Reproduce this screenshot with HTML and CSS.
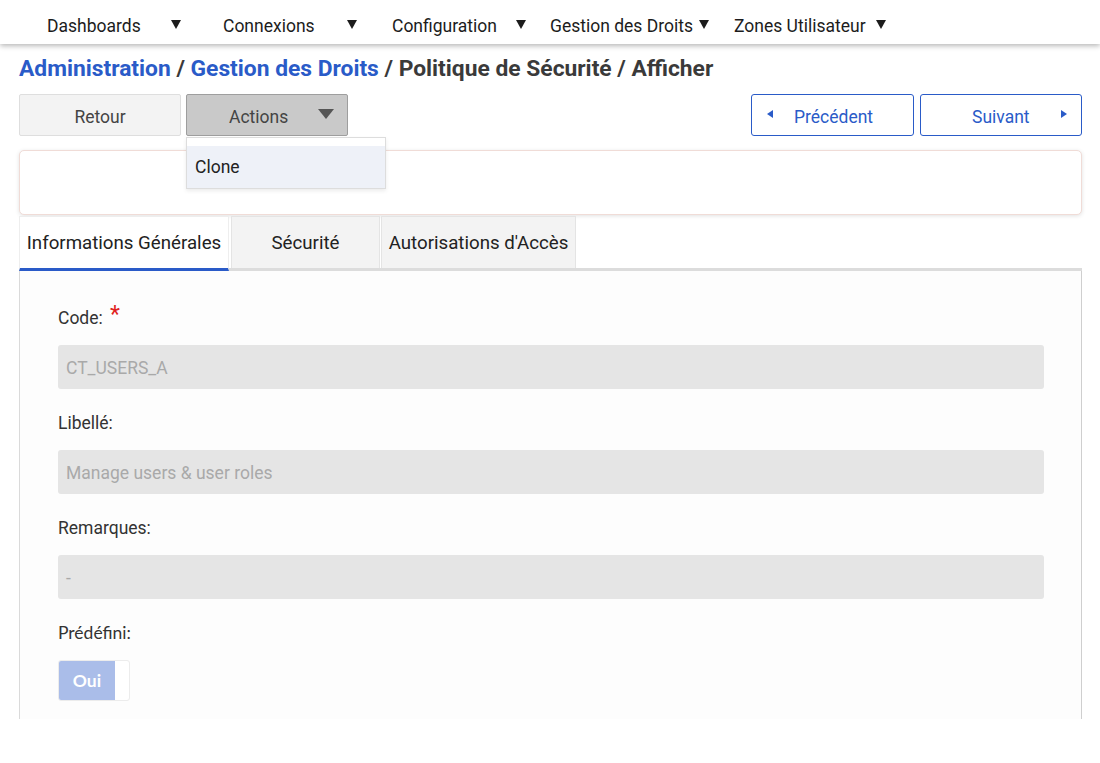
FILE: index.html
```html
<!DOCTYPE html>
<html lang="fr">
<head>
<meta charset="utf-8">
<title>Politique de Sécurité</title>
<link rel="stylesheet" href="styles.css">
</head>
<body>
<header class="topnav">
  <nav class="menu">
    <div class="menu-item"><span class="menu-label">Dashboards</span><span class="caret"></span></div>
    <div class="menu-item"><span class="menu-label">Connexions</span><span class="caret"></span></div>
    <div class="menu-item"><span class="menu-label">Configuration</span><span class="caret"></span></div>
    <div class="menu-item"><span class="menu-label">Gestion des Droits</span><span class="caret"></span></div>
    <div class="menu-item"><span class="menu-label">Zones Utilisateur</span><span class="caret caret-wide"></span></div>
  </nav>
</header>
<main class="page">
  <h1 class="breadcrumb"><span class="crumb-link">Administration</span> / <span class="crumb-link">Gestion des Droits</span> / Politique de Sécurité / Afficher</h1>
  <div class="toolbar">
    <button class="btn btn-default">Retour</button>
    <div class="dropdown">
      <button class="btn btn-actions"><span class="btn-text">Actions</span><span class="caret-big"></span></button>
      <div class="dropdown-menu">
        <div class="dropdown-item">Clone</div>
      </div>
    </div>
    <div class="spacer"></div>
    <button class="btn btn-nav btn-prev"><span class="tri-left"></span><span class="nav-text">Précédent</span></button>
    <button class="btn btn-nav btn-next"><span class="nav-text">Suivant</span><span class="tri-right"></span></button>
  </div>
  <div class="card"></div>
  <div class="tabs">
    <div class="tab tab-active">Informations Générales</div>
    <div class="tab tab-secu">Sécurité</div>
    <div class="tab tab-auth">Autorisations d'Accès</div>
  </div>
  <section class="panel">
    <div class="field-group">
      <div class="label">Code: <span class="required">*</span></div>
      <div class="field">CT_USERS_A</div>
    </div>
    <div class="field-group">
      <div class="label">Libellé:</div>
      <div class="field">Manage users &amp; user roles</div>
    </div>
    <div class="field-group">
      <div class="label">Remarques:</div>
      <div class="field">-</div>
    </div>
    <div class="field-group last">
      <div class="label label-lato">Prédéfini:</div>
      <div class="toggle"><span class="toggle-on">Oui</span><span class="toggle-off"></span></div>
    </div>
  </section>
</main>
</body>
</html>
```
FILE: styles.css
```css
* { box-sizing: border-box; }
html, body { margin: 0; padding: 0; background: #fff; }
body {
  font-family: Roboto, "Liberation Sans", sans-serif;
  color: #333;
  font-size: 17.5px;
}

.topnav {
  height: 44px;
  background: #fff;
  box-shadow: 0 2px 5px rgba(0, 0, 0, 0.28);
  position: relative;
  z-index: 2;
}
.menu {
  display: grid;
  grid-template-columns: 176px 169px 158px 184px auto;
  padding-left: 47px;
  height: 44px;
  align-items: center;
}
.menu-item {
  display: flex;
  align-items: center;
  color: #1c1c1c;
  font-size: 17.5px;
  line-height: 20px;
  padding-top: 7px;
}
.menu-label { min-width: 118px; }
.caret {
  margin-left: 6px;
  width: 0;
  height: 0;
  border-left: 5px solid transparent;
  border-right: 5px solid transparent;
  border-top: 9px solid #1c1c1c;
  margin-top: -2px;
}
.caret-wide { margin-left: 10px; }

.page { padding: 0 18px 0 19px; }

.breadcrumb {
  margin: 13px 0 0;
  font-size: 22.8px;
  line-height: 24px;
  font-weight: 700;
  color: #3a3a3a;
}
.crumb-link { color: #2a5bc8; }

.toolbar {
  display: flex;
  margin-top: 13px;
  height: 42px;
}
.btn {
  font-family: Roboto, "Liberation Sans", sans-serif;
  font-size: 17.5px;
  height: 42px;
  border-radius: 2px;
  padding: 3px 0 0;
  cursor: pointer;
}
.btn-default {
  width: 162px;
  background: #f3f3f3;
  border: 1px solid #dedede;
  color: #444;
}
.dropdown {
  position: relative;
  margin-left: 5px;
}
.btn-actions {
  width: 162px;
  background: #c9c9c9;
  border: 1px solid #9e9e9e;
  color: #444;
  display: flex;
  align-items: center;
}
.btn-actions .btn-text {
  margin-left: 42px;
}
.caret-big {
  margin-left: 30px;
  width: 0;
  height: 0;
  border-left: 8px solid transparent;
  border-right: 8px solid transparent;
  border-top: 10px solid #555;
  margin-top: -6px;
}
.dropdown-menu {
  position: absolute;
  top: 43px;
  left: 0;
  width: 200px;
  background: #fff;
  border: 1px solid #ddd;
  box-shadow: 0 2px 4px rgba(0, 0, 0, 0.08);
  padding-top: 8px;
  z-index: 5;
}
.dropdown-item {
  background: #eef1f8;
  height: 42px;
  line-height: 42px;
  padding-left: 8px;
  color: #222;
}
.spacer { flex: 1; }
.btn-nav {
  background: #fff;
  border: 1px solid #2a5bc8;
  border-radius: 3px;
  color: #2a5bc8;
  display: flex;
  align-items: center;
}
.btn-prev { width: 163px; padding-left: 15px; }
.btn-prev .nav-text { margin-left: 21px; }
.btn-next { width: 162px; margin-left: 6px; padding-left: 51px; }
.btn-next .nav-text { margin-right: 31px; }
.tri-left {
  width: 0; height: 0;
  border-top: 4px solid transparent;
  border-bottom: 4px solid transparent;
  border-right: 6px solid #2a5bc8;
  margin-top: -5px;
}
.tri-right {
  width: 0; height: 0;
  border-top: 4px solid transparent;
  border-bottom: 4px solid transparent;
  border-left: 6px solid #2a5bc8;
  margin-top: -5px;
}

.card {
  margin-top: 14px;
  height: 65px;
  background: #fff;
  border: 1px solid #f0dcd7;
  border-radius: 5px;
  box-shadow: 0 1px 4px rgba(0, 0, 0, 0.12);
}

.tabs {
  display: flex;
  margin-top: 1px;
  height: 55px;
  border-bottom: 3px solid #dcdcdc;
}
.tab {
  height: 52px;
  display: flex;
  align-items: center;
  justify-content: center;
  color: #222;
  font-size: 18.7px;
  background: #f3f3f3;
  border: 1px solid #e4e4e4;
  border-bottom: none;
  white-space: nowrap;
}
.tab-active {
  width: 210px;
  background: #fff;
  border-color: #eee;
  height: 55px;
  border-bottom: 3px solid #2a5bc8;
}
.tab-secu { width: 149px; margin-left: 2px; }
.tab-auth { width: 195px; margin-left: 1px; }

.panel {
  background: #fdfdfd;
  border-left: 1px solid #dadada;
  border-right: 1px solid #cfcfcf;
  padding: 37px 37px 18px 38px;
}
.field-group { margin-bottom: 24px; }
.field-group.last { margin-bottom: 0; }
.label {
  font-size: 17.5px;
  line-height: 20px;
  color: #333;
  margin-bottom: 17px;
}
.label-lato { font-family: Lato, Roboto, sans-serif; }
.required {
  color: #e02020;
  font-size: 23px;
  line-height: 0;
  vertical-align: 2px;
  margin-left: 3px;
}
.field {
  height: 44px;
  background: #e5e5e5;
  border-radius: 3px;
  color: #a9a9a9;
  line-height: 46px;
  padding-left: 8px;
  font-size: 17.5px;
}
.toggle {
  display: flex;
  height: 41px;
  width: 72px;
  border: 1px solid #ececec;
  border-radius: 3px;
  overflow: hidden;
  background: #fff;
}
.toggle-on {
  width: 56px;
  background: #aabde9;
  color: #fff;
  font-family: Lato, Roboto, sans-serif;
  font-weight: 700;
  font-size: 17.5px;
  display: flex;
  align-items: center;
  justify-content: center;
}
.toggle-off { flex: 1; }
```
